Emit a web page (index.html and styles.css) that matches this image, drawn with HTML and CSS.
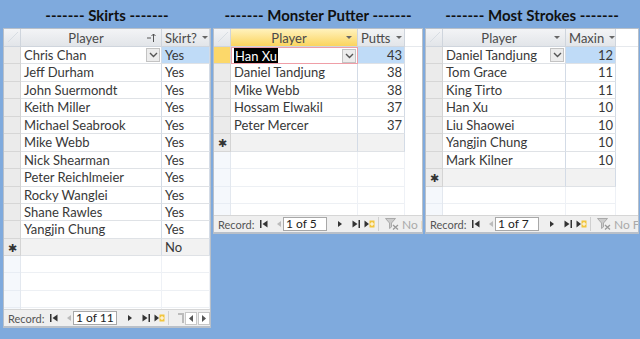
FILE: index.html
```html
<!DOCTYPE html>
<html>
<head>
    <meta charset="UTF-8">
    <meta name="viewport" content="width=device-width, initial-scale=1.0">
    <title>Golf Awards</title>
    <link rel="stylesheet" href="styles.css">
</head>
<body>
    <div class="board">

        <section class="panel skirts">
            <h2 class="title">------- Skirts -------</h2>
            <div class="sheet">
                <div class="row head">
                    <div class="cell sel corner"></div>
                    <div class="cell hcell center">Player <svg class="sort" width="9" height="9" viewBox="0 0 9 9"><path d="M0 5h4M6.5 9V1M4.5 3l2-2 2 2" stroke="#555" fill="none"/></svg></div>
                    <div class="cell hcell">Skirt? <span class="arrow"></span></div>
                </div>
                <div class="row">
                    <div class="cell sel"></div>
                    <div class="cell combo"><span>Chris Chan</span><span class="drop"><svg width="9" height="6" viewBox="0 0 9 6"><path d="M1 1l3.5 3.5L8 1" stroke="#555" stroke-width="1.4" fill="none"/></svg></span></div>
                    <div class="cell hl">Yes</div>
                </div>
                <div class="row"><div class="cell sel"></div><div class="cell">Jeff Durham</div><div class="cell">Yes</div></div>
                <div class="row"><div class="cell sel"></div><div class="cell">John Suermondt</div><div class="cell">Yes</div></div>
                <div class="row"><div class="cell sel"></div><div class="cell">Keith Miller</div><div class="cell">Yes</div></div>
                <div class="row"><div class="cell sel"></div><div class="cell">Michael Seabrook</div><div class="cell">Yes</div></div>
                <div class="row"><div class="cell sel"></div><div class="cell">Mike Webb</div><div class="cell">Yes</div></div>
                <div class="row"><div class="cell sel"></div><div class="cell">Nick Shearman</div><div class="cell">Yes</div></div>
                <div class="row"><div class="cell sel"></div><div class="cell">Peter Reichlmeier</div><div class="cell">Yes</div></div>
                <div class="row"><div class="cell sel"></div><div class="cell">Rocky Wanglei</div><div class="cell">Yes</div></div>
                <div class="row"><div class="cell sel"></div><div class="cell">Shane Rawles</div><div class="cell">Yes</div></div>
                <div class="row"><div class="cell sel"></div><div class="cell">Yangjin Chung</div><div class="cell">Yes</div></div>
                <div class="row newrow"><div class="cell sel">&#10033;</div><div class="cell"></div><div class="cell">No</div></div>
                <div class="row empty"><div class="cell sel"></div><div class="cell"></div><div class="cell"></div></div>
                <div class="nav">
                    <span class="label">Record:</span>
                    <svg class="ico first" width="8" height="8" viewBox="0 0 8 8"><rect width="1.5" height="8"/><path d="M7.5 0.5L2.5 4l5 3.5z"/></svg>
                    <svg class="ico prev" width="6" height="8" viewBox="0 0 6 8"><path d="M5 1L1 4l4 3z"/></svg>
                    <span class="pos">1 of 11</span>
                    <svg class="ico next" width="6" height="8" viewBox="0 0 6 8"><path d="M1 1l4 3-4 3z"/></svg>
                    <svg class="ico last" width="8" height="8" viewBox="0 0 8 8"><path d="M0.5 0.5L5.5 4l-5 3.5z"/><rect x="6.5" width="1.5" height="8"/></svg>
                    <svg class="ico new" width="11" height="8" viewBox="0 0 11 8"><path d="M0.5 0.5L5 4 0.5 7.5z"/><rect x="5.5" y="0.5" width="5" height="7" fill="#f2c53d"/><path d="M8 2v4M6 4h4" stroke="#fff" stroke-width="1"/></svg>
                    <span class="split"></span>
                    <span class="hscroll">
                        <svg width="6" height="10" viewBox="0 0 6 10"><path d="M0 0h6v10H4V2H0z" fill="#bbb"/></svg>
                        <span class="sbtn"><svg width="4" height="7" viewBox="0 0 4 7"><path d="M4 0L0 3.5 4 7z"/></svg></span>
                        <span class="sbtn"><svg width="4" height="7" viewBox="0 0 4 7"><path d="M0 0l4 3.5L0 7z"/></svg></span>
                    </span>
                </div>
            </div>
        </section>

        <section class="panel putter">
            <h2 class="title">------- Monster Putter -------</h2>
            <div class="sheet">
                <div class="row head">
                    <div class="cell sel corner"></div>
                    <div class="cell hcell center active">Player <span class="arrow"></span></div>
                    <div class="cell hcell">Putts <span class="arrow"></span></div>
                    <div class="cell fill"></div>
                </div>
                <div class="row">
                    <div class="cell sel current"></div>
                    <div class="cell combo editing"><span class="picked">Han Xu</span><span class="drop"><svg width="9" height="6" viewBox="0 0 9 6"><path d="M1 1l3.5 3.5L8 1" stroke="#555" stroke-width="1.4" fill="none"/></svg></span></div>
                    <div class="cell hl num">43</div>
                    <div class="cell fill"></div>
                </div>
                <div class="row"><div class="cell sel"></div><div class="cell">Daniel Tandjung</div><div class="cell num">38</div><div class="cell fill"></div></div>
                <div class="row"><div class="cell sel"></div><div class="cell">Mike Webb</div><div class="cell num">38</div><div class="cell fill"></div></div>
                <div class="row"><div class="cell sel"></div><div class="cell">Hossam Elwakil</div><div class="cell num">37</div><div class="cell fill"></div></div>
                <div class="row"><div class="cell sel"></div><div class="cell">Peter Mercer</div><div class="cell num">37</div><div class="cell fill"></div></div>
                <div class="row newrow"><div class="cell sel">&#10033;</div><div class="cell"></div><div class="cell"></div><div class="cell fill"></div></div>
                <div class="row empty"><div class="cell sel"></div><div class="cell"></div><div class="cell"></div><div class="cell fill"></div></div>
                <div class="nav">
                    <span class="label">Record:</span>
                    <svg class="ico first" width="8" height="8" viewBox="0 0 8 8"><rect width="1.5" height="8"/><path d="M7.5 0.5L2.5 4l5 3.5z"/></svg>
                    <svg class="ico prev" width="6" height="8" viewBox="0 0 6 8"><path d="M5 1L1 4l4 3z"/></svg>
                    <span class="pos">1 of 5</span>
                    <svg class="ico next" width="6" height="8" viewBox="0 0 6 8"><path d="M1 1l4 3-4 3z"/></svg>
                    <svg class="ico last" width="8" height="8" viewBox="0 0 8 8"><path d="M0.5 0.5L5.5 4l-5 3.5z"/><rect x="6.5" width="1.5" height="8"/></svg>
                    <svg class="ico new" width="11" height="8" viewBox="0 0 11 8"><path d="M0.5 0.5L5 4 0.5 7.5z"/><rect x="5.5" y="0.5" width="5" height="7" fill="#f2c53d"/><path d="M8 2v4M6 4h4" stroke="#fff" stroke-width="1"/></svg>
                    <span class="split"></span>
                    <svg class="funnel" width="14" height="12" viewBox="0 0 14 12"><path d="M0.5 0.5h10l-4 4.5v4l-2 1.5v-5.5z" fill="#ccc" stroke="#aaa"/><path d="M8 7l5 4.5M13 7l-5 4.5" stroke="#999" stroke-width="1.3"/></svg>
                    <span class="nofilter">No F</span>
                </div>
            </div>
        </section>

        <section class="panel strokes">
            <h2 class="title">------- Most Strokes -------</h2>
            <div class="sheet">
                <div class="row head">
                    <div class="cell sel corner"></div>
                    <div class="cell hcell center">Player <span class="arrow"></span></div>
                    <div class="cell hcell">Maxin <span class="arrow"></span></div>
                    <div class="cell fill"></div>
                </div>
                <div class="row">
                    <div class="cell sel"></div>
                    <div class="cell combo"><span>Daniel Tandjung</span><span class="drop"><svg width="9" height="6" viewBox="0 0 9 6"><path d="M1 1l3.5 3.5L8 1" stroke="#555" stroke-width="1.4" fill="none"/></svg></span></div>
                    <div class="cell hl num">12</div>
                    <div class="cell fill"></div>
                </div>
                <div class="row"><div class="cell sel"></div><div class="cell">Tom Grace</div><div class="cell num">11</div><div class="cell fill"></div></div>
                <div class="row"><div class="cell sel"></div><div class="cell">King Tirto</div><div class="cell num">11</div><div class="cell fill"></div></div>
                <div class="row"><div class="cell sel"></div><div class="cell">Han Xu</div><div class="cell num">10</div><div class="cell fill"></div></div>
                <div class="row"><div class="cell sel"></div><div class="cell">Liu Shaowei</div><div class="cell num">10</div><div class="cell fill"></div></div>
                <div class="row"><div class="cell sel"></div><div class="cell">Yangjin Chung</div><div class="cell num">10</div><div class="cell fill"></div></div>
                <div class="row"><div class="cell sel"></div><div class="cell">Mark Kilner</div><div class="cell num">10</div><div class="cell fill"></div></div>
                <div class="row newrow"><div class="cell sel">&#10033;</div><div class="cell"></div><div class="cell"></div><div class="cell fill"></div></div>
                <div class="row empty"><div class="cell sel"></div><div class="cell"></div><div class="cell"></div><div class="cell fill"></div></div>
                <div class="nav">
                    <span class="label">Record:</span>
                    <svg class="ico first" width="8" height="8" viewBox="0 0 8 8"><rect width="1.5" height="8"/><path d="M7.5 0.5L2.5 4l5 3.5z"/></svg>
                    <svg class="ico prev" width="6" height="8" viewBox="0 0 6 8"><path d="M5 1L1 4l4 3z"/></svg>
                    <span class="pos">1 of 7</span>
                    <svg class="ico next" width="6" height="8" viewBox="0 0 6 8"><path d="M1 1l4 3-4 3z"/></svg>
                    <svg class="ico last" width="8" height="8" viewBox="0 0 8 8"><path d="M0.5 0.5L5.5 4l-5 3.5z"/><rect x="6.5" width="1.5" height="8"/></svg>
                    <svg class="ico new" width="11" height="8" viewBox="0 0 11 8"><path d="M0.5 0.5L5 4 0.5 7.5z"/><rect x="5.5" y="0.5" width="5" height="7" fill="#f2c53d"/><path d="M8 2v4M6 4h4" stroke="#fff" stroke-width="1"/></svg>
                    <span class="split"></span>
                    <svg class="funnel" width="14" height="12" viewBox="0 0 14 12"><path d="M0.5 0.5h10l-4 4.5v4l-2 1.5v-5.5z" fill="#ccc" stroke="#aaa"/><path d="M8 7l5 4.5M13 7l-5 4.5" stroke="#999" stroke-width="1.3"/></svg>
                    <span class="nofilter">No F</span>
                </div>
            </div>
        </section>

    </div>
</body>
</html>
```

FILE: styles.css
```css
html, body {
    height: 100%;
}

body {
    margin: 0;
    background-color: #7faadd;
    font-family: Lato, "Open Sans", sans-serif;
    color: #333;
}

.board {
    display: flex;
    align-items: flex-start;
    gap: 2px;
    padding-left: 3px;
}

.panel {
    display: flex;
    flex-direction: column;
}

.skirts {
    width: 208px;
}

.putter {
    width: 210px;
}

.strokes {
    width: 214px;
}

.title {
    margin: 0;
    height: 28px;
    padding-top: 6px;
    box-sizing: border-box;
    text-align: center;
    font-size: 15px;
    font-weight: bold;
    line-height: 19px;
    color: #111;
    white-space: nowrap;
}

.sheet {
    display: flex;
    flex-direction: column;
    border: 1px solid #b9c0c9;
    border-bottom-width: 2px;
    background-color: #fff;
    overflow: hidden;
}

.skirts .sheet {
    height: 297px;
}

.putter .sheet,
.strokes .sheet {
    height: 203px;
}

.row {
    display: grid;
    height: 17.45px;
    flex: none;
}

.skirts .row {
    grid-template-columns: 17px 141px 1fr;
}

.putter .row {
    grid-template-columns: 17px 127px 47px 1fr;
}

.strokes .row {
    grid-template-columns: 17px 123px 50px 1fr;
}

.cell {
    box-sizing: border-box;
    border-right: 1px solid #d3dbe6;
    border-bottom: 1px solid #dfe2e6;
    padding-left: 3px;
    font-size: 13px;
    line-height: 16px;
    white-space: nowrap;
    overflow: hidden;
    color: #383838;
}

.num {
    text-align: right;
    padding-right: 2px;
}

.sel {
    background-color: #ebebeb;
    border-right-color: #d4d4d4;
    border-bottom-color: #d6d6d6;
    padding-left: 0;
    text-align: center;
    font-size: 11px;
    color: #333;
}

.sel.current {
    background-color: #fcd86a;
}

.fill {
    border: none;
    background-color: #fff;
}

.head {
    height: 18px;
}

.head .cell {
    background: linear-gradient(#f3f4f6, #e2e5e9);
    border-bottom-color: #cfd5dd;
    border-right-color: #cfd5dd;
    color: #4a4a4a;
    display: flex;
    align-items: center;
    gap: 5px;
}

.head .fill {
    background: #fff;
    border-bottom: 1px solid #e6e9ed;
}

.head .corner {
    background: linear-gradient(135deg, transparent 45%, #d8dde3 46%, #d8dde3 54%, transparent 55%), linear-gradient(#f3f4f6, #e2e5e9);
    background-size: 10px 10px, 100% 100%;
    background-repeat: no-repeat;
    background-position: 4px 3px, 0 0;
}

.head .center {
    justify-content: center;
    position: relative;
    padding-left: 0;
    padding-right: 10px;
}

.head .center .arrow,
.head .center .sort {
    position: absolute;
    right: 5px;
    top: 7px;
}

.head .center .sort {
    top: 4px;
}

.head .active {
    background: linear-gradient(#fff2bd, #fbd45e);
}

.arrow {
    display: inline-block;
    width: 0;
    height: 0;
    border-left: 3px solid transparent;
    border-right: 3px solid transparent;
    border-top: 3px solid #666;
}

.hl {
    background-color: #bfdbf7;
}

.combo {
    display: flex;
    justify-content: space-between;
    align-items: center;
    padding-right: 1px;
}

.drop {
    display: flex;
    align-items: center;
    justify-content: center;
    width: 14px;
    height: 14px;
    box-sizing: border-box;
    border: 1px solid #c3c3c3;
    background-color: #ececec;
}

.editing {
    border: 1px solid #ef9ea7;
    padding-left: 2px;
}

.picked {
    background-color: #000;
    color: #fff;
    padding: 0 1px;
}

.newrow .cell {
    background-color: #f2f2f2;
}

.newrow .sel {
    background-color: #ebebeb;
    line-height: 17px;
}

.newrow .fill {
    background-color: #fff;
}

.empty {
    flex: 1;
    height: auto;
}

.empty .cell {
    border-bottom: none;
    border-right-color: #eef1f6;
    background: repeating-linear-gradient(#fff 0, #fff 16.45px, #edf0f4 16.45px, #edf0f4 17.45px);
}

.empty .sel {
    background: repeating-linear-gradient(#f5f8fc 0, #f5f8fc 16.45px, #e8edf4 16.45px, #e8edf4 17.45px);
    border-right-color: #e3e8ef;
}

.empty .fill {
    background: #fff;
}

.nav {
    flex: none;
    height: 16px;
    display: flex;
    align-items: center;
    background-color: #efefef;
    border-top: 1px solid #d6d6d6;
    padding-left: 4px;
    font-size: 11px;
    color: #555;
    white-space: nowrap;
    overflow: hidden;
}

.label {
    width: 34px;
    margin-right: 8px;
    flex: none;
}

.ico {
    fill: #333;
    flex: none;
}

.first {
    margin-right: 8px;
}

.prev {
    fill: #bbb;
    margin-right: 1px;
}

.next {
    margin-right: 9px;
}

.last {
    margin-right: 4px;
}

.new {
    margin-right: 3px;
}

.pos {
    width: 44px;
    height: 14px;
    box-sizing: border-box;
    border: 1px solid #a8a8a8;
    background-color: #fff;
    color: #222;
    font-size: 12px;
    line-height: 12px;
    padding-left: 2px;
    margin-right: 10px;
    flex: none;
}

.split {
    width: 1px;
    height: 14px;
    background-color: #d0d0d0;
    margin-right: 6px;
    flex: none;
}

.hscroll {
    display: flex;
    align-items: center;
    gap: 1px;
    margin-left: 3px;
}

.hscroll svg {
    fill: #555;
}

.sbtn {
    display: flex;
    align-items: center;
    justify-content: center;
    width: 12px;
    height: 13px;
    box-sizing: border-box;
    border: 1px solid #c8c8c8;
    background-color: #fff;
}

.funnel {
    flex: none;
    margin-right: 3px;
}

.nofilter {
    color: #aaa;
    font-size: 12px;
}
```
